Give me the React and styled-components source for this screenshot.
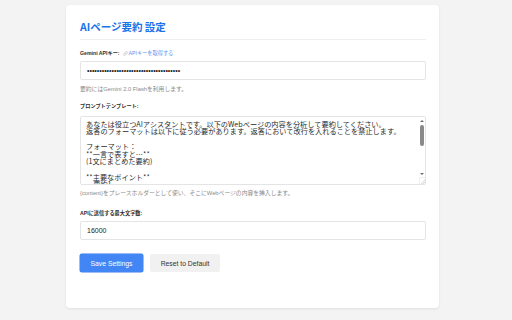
import React from "react";
import styled, { createGlobalStyle } from "styled-components";
import { Link } from "lucide-react";

const Global = createGlobalStyle`
  html, body { margin: 0; padding: 0; background: #f3f3f3; }
  body { font-family: "Liberation Sans", "Noto Sans CJK JP", sans-serif; color: #333; }
  * { box-sizing: border-box; }
`;

const Page = styled.div`
  padding: 5px 0 0 66px;
  min-height: 320px;
`;

const Card = styled.div`
  width: 373px;
  height: 303px;
  background: #fff;
  border-radius: 4px;
  box-shadow: 0 1px 3px rgba(0, 0, 0, 0.08);
  padding: 14px 13px 0 14px;
  display: flex;
  flex-direction: column;
`;

const Title = styled.h1`
  margin: 0;
  font-family: "Noto Sans CJK JP", "Liberation Sans", sans-serif;
  font-size: 10.5px;
  line-height: 14px;
  font-weight: 700;
  color: #1a73e8;
  padding: 1px 0 5px;
  border-bottom: 1px solid #eeeeee;
`;

const Field = styled.div`
  display: flex;
  flex-direction: column;
  margin-top: ${(p) => p.$mt}px;
`;

const Label = styled.label`
  display: flex;
  align-items: center;
  gap: 3px;
  font-family: "Liberation Sans", "Noto Sans CJK JP", sans-serif;
  font-size: 5.2px;
  line-height: 7px;
  font-weight: 700;
  color: #2e2e2e;
  margin-bottom: ${(p) => p.$mb}px;
`;

const ExtLink = styled.a`
  display: inline-flex;
  align-items: center;
  gap: 1px;
  font-weight: 400;
  color: #5b93ee;
  text-decoration: none;
  svg { color: #9a9a9a; }
`;

const Input = styled.input`
  width: 100%;
  height: 19px;
  border: 1px solid #e4e4e4;
  border-radius: 2px;
  padding: 0 6px;
  font-family: "Liberation Sans", sans-serif;
  font-size: ${(p) => p.$fs}px;
  color: #222;
  outline: none;
  background: #fff;
`;

const Help = styled.div`
  font-family: "Liberation Sans", "Noto Sans CJK JP", sans-serif;
  font-size: 5.8px;
  line-height: 7px;
  color: #8a8a8a;
  margin-top: ${(p) => p.$mt}px;
`;

const AreaWrap = styled.div`
  position: relative;
  width: 100%;
  height: 69px;
`;

const TextArea = styled.textarea`
  display: block;
  width: 100%;
  height: 100%;
  border: 1px solid #e4e4e4;
  border-radius: 2px;
  padding: 3.5px 10px 4px 5px;
  font-family: "Noto Sans CJK JP", sans-serif;
  font-size: 7.2px;
  line-height: 7.6px;
  color: #2a2a2a;
  outline: none;
  resize: none;
`;

const ScrollBar = styled.div`
  position: absolute;
  top: 1px;
  right: 1px;
  bottom: 1px;
  width: 6px;
  display: flex;
  flex-direction: column;
  align-items: center;
  pointer-events: none;
`;

const Arrow = styled.div`
  width: 0;
  height: 0;
  border-left: 2px solid transparent;
  border-right: 2px solid transparent;
  ${(p) => (p.$up ? "border-bottom: 2.5px solid #6d6d6d;" : "border-top: 2.5px solid #6d6d6d;")}
  margin-top: ${(p) => p.$mt}px;
`;

const Thumb = styled.div`
  width: 3.5px;
  height: 21px;
  border-radius: 2px;
  background: #8a8a8a;
  margin-top: 3px;
`;

const Spacer = styled.div`
  flex: 1;
`;

const Grip = styled.div`
  width: 6px;
  height: 7px;
  margin-top: 2px;
  display: flex;
  align-items: flex-end;
  justify-content: flex-end;
  border-top: 1px solid #f0f0f0;
  border-left: 1px solid #f0f0f0;
`;

const Button = styled.button`
  height: 18px;
  width: ${(p) => p.$w}px;
  border: none;
  border-radius: 2px;
  font-family: "Liberation Sans", sans-serif;
  font-size: 6.8px;
  padding: 0;
  cursor: pointer;
  background: ${(p) => (p.$primary ? "#4285f4" : "#f1f1f1")};
  color: ${(p) => (p.$primary ? "#fff" : "#333")};
  box-shadow: ${(p) => (p.$primary ? "0 0 0 0.5px #3b7be8" : "none")};
`;

const Buttons = styled.div`
  display: flex;
  gap: 7px;
  margin-top: 14px;
`;

const template = `あなたは役立つAIアシスタントです。以下のWebページの内容を分析して要約してください。
返答のフォーマットは以下に従う必要があります。返答において改行を入れることを禁止します。

フォーマット：
**一言で表すと…**
(1文にまとめた要約)

**主要なポイント**
・要約1
・要約2
・要約3

{content}`;

export default function App() {
  return (
    <>
      <Global />
      <Page>
        <Card>
          <Title>AIページ要約 設定</Title>
          <Field $mt={10}>
            <Label $mb={4}>
              Gemini APIキー:
              <ExtLink href="#">
                <Link size={5} strokeWidth={2} />
                APIキーを取得する
              </ExtLink>
            </Label>
            <Input type="password" $fs={7} defaultValue="AIzaSyDxxxxxxxxxxxxxxxxxxxxxxxxxxxxxxx" />
            <Help $mt={6}>要約にはGemini 2.0 Flashを利用します。</Help>
          </Field>
          <Field $mt={10}>
            <Label $mb={6}>プロンプトテンプレート:</Label>
            <AreaWrap>
              <TextArea defaultValue={template} />
              <ScrollBar aria-hidden="true">
                <Arrow $up $mt={3} />
                <Thumb />
                <Spacer />
                <Arrow $mt={0} />
                <Grip>
                  <svg width="4" height="4" viewBox="0 0 4 4">
                    <path d="M4 0L0 4M4 2L2 4" stroke="#aaa" strokeWidth="0.5" />
                  </svg>
                </Grip>
              </ScrollBar>
            </AreaWrap>
            <Help $mt={5}>{"{content}"}をプレースホルダーとして使い、そこにWebページの内容を挿入します。</Help>
          </Field>
          <Field $mt={13}>
            <Label $mb={4}>APIに送信する最大文字数:</Label>
            <Input type="number" $fs={7} defaultValue="16000" />
          </Field>
          <Buttons>
            <Button $primary $w={63}>Save Settings</Button>
            <Button $w={70}>Reset to Default</Button>
          </Buttons>
        </Card>
      </Page>
    </>
  );
}
